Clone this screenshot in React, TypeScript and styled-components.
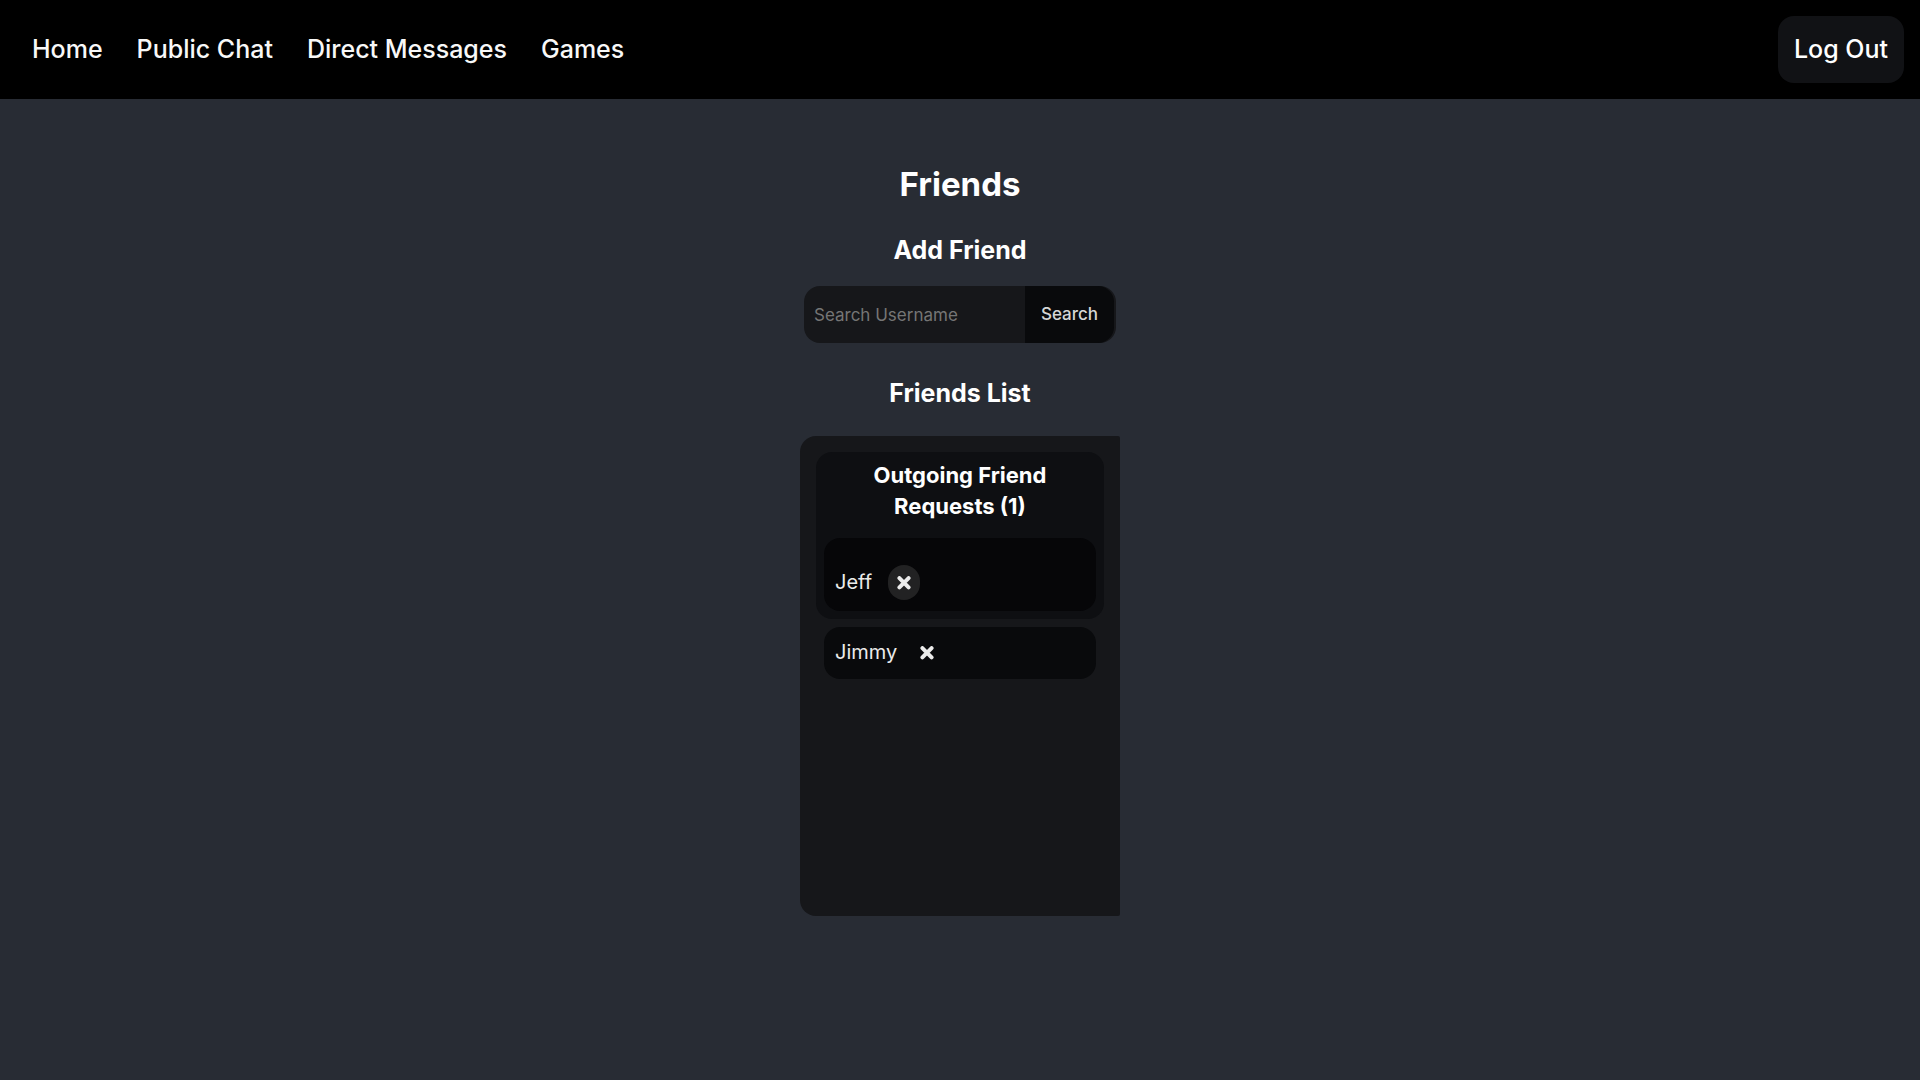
import React, { useState } from 'react';
import styled, { createGlobalStyle } from 'styled-components';

const GlobalStyle = createGlobalStyle`
  *, *::before, *::after { box-sizing: border-box; }
  body {
    margin: 0;
    min-height: 100vh;
    background: #282c34;
    color: #ffffff;
    font-family: Inter, "Open Sans", sans-serif;
  }
  button, input { font-family: inherit; }
`;

const NavBar = styled.header`
  display: flex;
  align-items: center;
  justify-content: space-between;
  padding: 16px 16px 16px 32px;
  background: #000000;
`;

const NavLinks = styled.nav`
  display: flex;
  gap: 34px;
`;

const NavLink = styled.a`
  color: #f8f8f8;
  font-size: 25px;
  font-weight: 500;
  line-height: 35px;
  text-decoration: none;
`;

const LogOutButton = styled.button`
  padding: 16px;
  border: 0;
  border-radius: 16px;
  background: #111215;
  color: #ffffff;
  font-size: 25px;
  font-weight: 500;
  line-height: 35px;
  cursor: pointer;
`;

const Main = styled.main`
  display: flex;
  flex-direction: column;
  align-items: center;
  gap: 24px;
  padding: 61px 16px 64px;
`;

const PageTitle = styled.h1`
  margin: 0;
  font-size: 33px;
  font-weight: 700;
  line-height: 48px;
`;

const Section = styled.section<{ $gap: number }>`
  display: flex;
  flex-direction: column;
  align-items: center;
  gap: ${(p) => p.$gap}px;
  margin-bottom: 8px;
`;

const SectionTitle = styled.h2`
  margin: 0;
  font-size: 25px;
  font-weight: 700;
  line-height: 36px;
`;

const SearchForm = styled.form`
  display: flex;
  width: 312px;
  max-width: 100%;
  padding-right: 2px;
  border-radius: 16px;
  background: #16171a;
`;

const SearchInput = styled.input`
  flex: 1;
  min-width: 0;
  padding: 16px 10px;
  border: 0;
  border-radius: 16px 0 0 16px;
  outline: 0;
  background: transparent;
  color: #ffffff;
  font-size: 17px;
  line-height: 24px;
  &::placeholder { color: #757575; }
`;

const SearchButton = styled.button`
  padding: 16px;
  border: 0;
  border-radius: 0 16px 16px 0;
  background: #090a0c;
  color: #d6d6d6;
  font-size: 17px;
  font-weight: 500;
  line-height: 25px;
  cursor: pointer;
`;

const ListPanel = styled.div`
  width: 320px;
  max-width: 100%;
  min-height: 480px;
  padding: 16px;
  border-radius: 16px 2px 2px 16px;
  background: #16171a;
`;

const RequestGroup = styled.section`
  padding: 8px;
  margin-bottom: 8px;
  border-radius: 16px;
  background: #0e0f12;
`;

const GroupTitle = styled.h3`
  margin: 0 0 16px;
  padding: 0 32px;
  font-size: 22px;
  font-weight: 700;
  line-height: 31px;
  text-align: center;
`;

const People = styled.ul<{ $inset?: boolean }>`
  margin: 0;
  padding: ${(p) => (p.$inset ? '0 8px' : '0')};
  list-style: none;
`;

const Person = styled.li<{ $pending?: boolean }>`
  display: flex;
  align-items: center;
  gap: 16px;
  padding: ${(p) => (p.$pending ? '27px 11px 11px' : '8px 11px 9px')};
  border-radius: 16px;
  background: ${(p) => (p.$pending ? '#060608' : '#090a0c')};
`;

const PersonName = styled.span`
  color: #ebebeb;
  font-size: 20px;
  line-height: 35px;
`;

const RemoveButton = styled.button<{ $active?: boolean }>`
  display: flex;
  align-items: center;
  justify-content: center;
  width: ${(p) => (p.$active ? 32 : 28)}px;
  height: 35px;
  padding: 0;
  border: 0;
  border-radius: 16px;
  background: ${(p) => (p.$active ? '#222223' : 'transparent')};
  color: #ebebeb;
  cursor: pointer;
`;

function CrossIcon() {
  return (
    <svg width="14" height="14" viewBox="0 0 14 14" fill="none" stroke="currentColor" strokeWidth="4" strokeLinecap="round" aria-hidden="true">
      <path d="M2.4 2.1 11.6 11.3M11.6 2.1 2.4 11.3" />
    </svg>
  );
}

const links = ['Home', 'Public Chat', 'Direct Messages', 'Games'];
const outgoing = ['Jeff'];
const friends = ['Jimmy'];

export default function App() {
  const [query, setQuery] = useState('');
  return (
    <>
      <GlobalStyle />
      <NavBar>
        <NavLinks>
          {links.map((label) => (
            <NavLink key={label} href="#">{label}</NavLink>
          ))}
        </NavLinks>
        <LogOutButton type="button">Log Out</LogOutButton>
      </NavBar>
      <Main>
        <PageTitle>Friends</PageTitle>
        <Section $gap={18}>
          <SectionTitle>Add Friend</SectionTitle>
          <SearchForm onSubmit={(e) => e.preventDefault()}>
            <SearchInput
              type="text"
              aria-label="Search Username"
              placeholder="Search Username"
              value={query}
              onChange={(e) => setQuery(e.target.value)}
            />
            <SearchButton type="submit">Search</SearchButton>
          </SearchForm>
        </Section>
        <Section $gap={25}>
          <SectionTitle>Friends List</SectionTitle>
          <ListPanel>
            <RequestGroup>
              <GroupTitle>{`Outgoing Friend Requests (${outgoing.length})`}</GroupTitle>
              <People>
                {outgoing.map((name) => (
                  <Person key={name} $pending>
                    <PersonName>{name}</PersonName>
                    <RemoveButton type="button" $active aria-label={`Cancel request to ${name}`}>
                      <CrossIcon />
                    </RemoveButton>
                  </Person>
                ))}
              </People>
            </RequestGroup>
            <People $inset>
              {friends.map((name) => (
                <Person key={name}>
                  <PersonName>{name}</PersonName>
                  <RemoveButton type="button" aria-label={`Remove ${name}`}>
                    <CrossIcon />
                  </RemoveButton>
                </Person>
              ))}
            </People>
          </ListPanel>
        </Section>
      </Main>
    </>
  );
}
